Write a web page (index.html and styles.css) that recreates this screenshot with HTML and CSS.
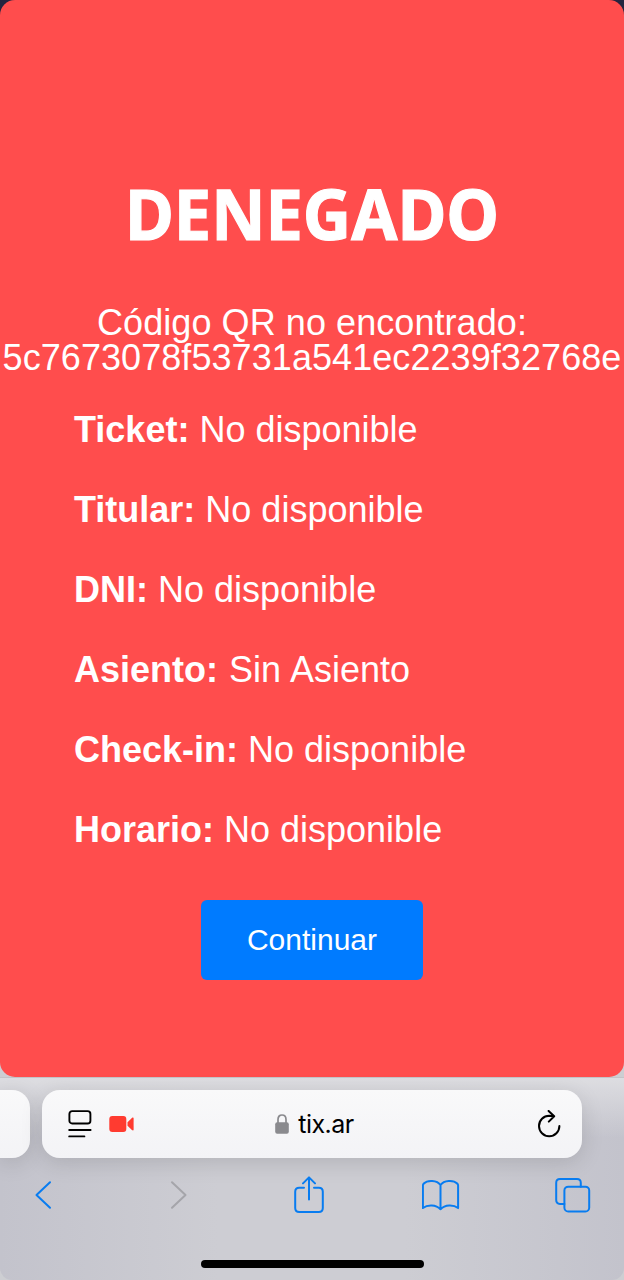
FILE: index.html
```html
<!DOCTYPE html>
<html lang="es">
<head>
    <meta charset="UTF-8">
    <title>Denegado</title>
    <link rel="stylesheet" href="styles.css">
</head>
<body>
    <div class="page">
        <h1>DENEGADO</h1>
        <p class="message">Código QR no encontrado:<br>5c7673078f53731a541ec2239f32768e</p>
        <div class="info">
            <p><strong>Ticket:</strong> No disponible</p>
            <p><strong>Titular:</strong> No disponible</p>
            <p><strong>DNI:</strong> No disponible</p>
            <p class="seat"><strong>Asiento:</strong> Sin Asiento</p>
            <p><strong>Check-in:</strong> No disponible</p>
            <p><strong>Horario:</strong> No disponible</p>
        </div>
        <button type="button" class="continue">Continuar</button>
    </div>

    <div class="browser">
        <div class="tabs">
            <div class="tab previous"></div>
            <div class="tab current">
                <div class="tab-left">
                    <svg width="24" height="28" viewBox="0 0 24 28" fill="none" stroke="#000" stroke-width="1.9" stroke-linecap="round">
                        <rect x="1.4" y="1.1" width="21" height="12.4" rx="2.8"/>
                        <path d="M1.2 20H22.6M1.2 26.4H16.4"/>
                    </svg>
                    <svg width="26" height="18" viewBox="0 0 26 18" fill="#ff3b30">
                        <rect x="0.3" y="1" width="17" height="16" rx="3"/>
                        <path d="M18.5 7.3L22.9 3C23.8 2.2 24.6 2.4 24.6 3.4V14.6C24.6 15.6 23.8 15.8 22.9 15L18.5 10.8Z"/>
                    </svg>
                </div>
                <div class="address">
                    <svg width="14" height="20" viewBox="0 0 14 20">
                        <path d="M3 9V5.5C3 -0.5 11 -0.5 11 5.5V9" fill="none" stroke="#8a8a8e" stroke-width="1.7"/>
                        <rect x="0.2" y="8.3" width="13.6" height="11.4" rx="2" fill="#8a8a8e"/>
                    </svg>
                    <span>tix.ar</span>
                </div>
                <svg class="reload" width="24" height="28" viewBox="0 0 24 28" fill="none" stroke="#000" stroke-width="2" stroke-linecap="round" stroke-linejoin="round">
                    <path d="M22.4 16A10.2 10.2 0 1 1 12.2 5.8L17 6.2M11.6 0.9L17.2 6.2L11.8 11.6"/>
                </svg>
            </div>
        </div>
        <div class="toolbar">
            <svg width="38" height="38" viewBox="-11 -5 38 38"><path d="M15 1.2L1.5 14L15 26.8"/></svg>
            <svg class="disabled" width="38" height="38" viewBox="-14 -5 38 38"><path d="M1 1.2L14.5 14L1 26.8"/></svg>
            <svg width="38" height="38" viewBox="-5 0 38 38"><path d="M10 11.8H5.2Q1.2 11.8 1.2 15.8V32Q1.2 36 5.2 36H24.8Q28.8 36 28.8 32V15.8Q28.8 11.8 24.8 11.8H20M15 23.5V2M9 7.4L15 1.4L21 7.4"/></svg>
            <svg width="38" height="38" viewBox="0.5 -3.5 38 38"><path d="M19 5.5C15.5 0.5 6 0.2 2.3 4Q1.4 5 1.4 6V28.6C6 24.8 14.5 24.8 19 29.8C23.5 24.8 32 24.8 36.6 28.6V6Q36.6 5 35.7 4C32 0.2 22.5 0.5 19 5.5ZM19 5.5V29.8"/></svg>
            <svg width="38" height="38" viewBox="-0.8 -1.5 38 38"><path d="M9.6 26.4H5.2Q1.4 26.4 1.4 22.6V5.4Q1.4 1.6 5.2 1.6H22.2Q26 1.6 26 5.4V9.2"/><rect x="9.6" y="9.2" width="24.8" height="24.8" rx="3.8"/></svg>
        </div>
        <div class="home-bar"></div>
    </div>
</body>
</html>
```

FILE: styles.css
```css
* {
    box-sizing: border-box;
}
body {
    margin: 0;
    width: 624px;
    height: 1280px;
    overflow: hidden;
    background: linear-gradient(#25243f 0, #25243f 40px, #cdced2 41px);
    font-family: "Liberation Sans", Arial, sans-serif;
}
.page {
    height: 1077px;
    padding-top: 165px;
    background-color: #ff4d4d;
    border-radius: 15px;
    color: #fff;
    text-align: center;
}
h1 {
    margin: 0;
    font-family: "Noto Sans", sans-serif;
    font-size: 70px;
    line-height: 96px;
    font-weight: bold;
    -webkit-text-stroke: 1.2px #fff;
    stroke-linejoin: round;
    transform: scaleX(0.954);
}
.message {
    margin: 44px 0 0;
    font-size: 36px;
    line-height: 35px;
    letter-spacing: 0.07px;
    white-space: nowrap;
}
.info {
    margin-top: 34px;
    padding-left: 74px;
    text-align: left;
    font-size: 36px;
    line-height: 42px;
}
.info p {
    margin: 0 0 38px;
}
.info .seat {
    word-spacing: 1px;
}
.continue {
    display: block;
    width: 222px;
    height: 80px;
    margin: 49px auto 0;
    padding: 0;
    border: none;
    border-radius: 6px;
    background-color: #007bff;
    color: #fff;
    font-family: inherit;
    font-size: 30px;
}
.browser {
    height: 203px;
    padding-top: 12px;
    border-top: 1px solid #c4c4c8;
    border-radius: 0 0 12px 12px;
    background: linear-gradient(#dddde1 0, rgba(210, 210, 215, 0) 60px), linear-gradient(90deg, #c3c3cc 0, #cdcdd3 35%, #cdcdd3 65%, #c3c3cc 100%);
}
.tabs {
    display: flex;
    gap: 12px;
}
.tab {
    height: 68px;
    background: linear-gradient(#f9f9fa, #f3f3f6);
    box-shadow: 0 5px 22px rgba(0, 0, 0, 0.13);
}
.previous {
    width: 30px;
    border-radius: 0 18px 18px 0;
}
.current {
    display: grid;
    grid-template-columns: 1fr auto 1fr;
    align-items: center;
    width: 540px;
    padding: 0 21px 0 26px;
    border-radius: 18px;
}
.tab-left {
    display: flex;
    align-items: center;
    gap: 17px;
}
.address {
    display: flex;
    align-items: center;
    gap: 9px;
    font-family: Inter, sans-serif;
    font-size: 25px;
    letter-spacing: -0.5px;
    color: #000;
}
.reload {
    justify-self: end;
}
.toolbar {
    display: flex;
    justify-content: space-between;
    align-items: center;
    height: 38px;
    margin-top: 18px;
    padding: 0 32px 0 24px;
}
.toolbar svg {
    fill: none;
    stroke: #087cf0;
    stroke-width: 2;
    stroke-linecap: round;
    stroke-linejoin: round;
}
.toolbar .disabled {
    stroke: #a5a5aa;
}
.home-bar {
    width: 223px;
    height: 8px;
    margin: 46px auto 0;
    border-radius: 4px;
    background-color: #000;
}
```
